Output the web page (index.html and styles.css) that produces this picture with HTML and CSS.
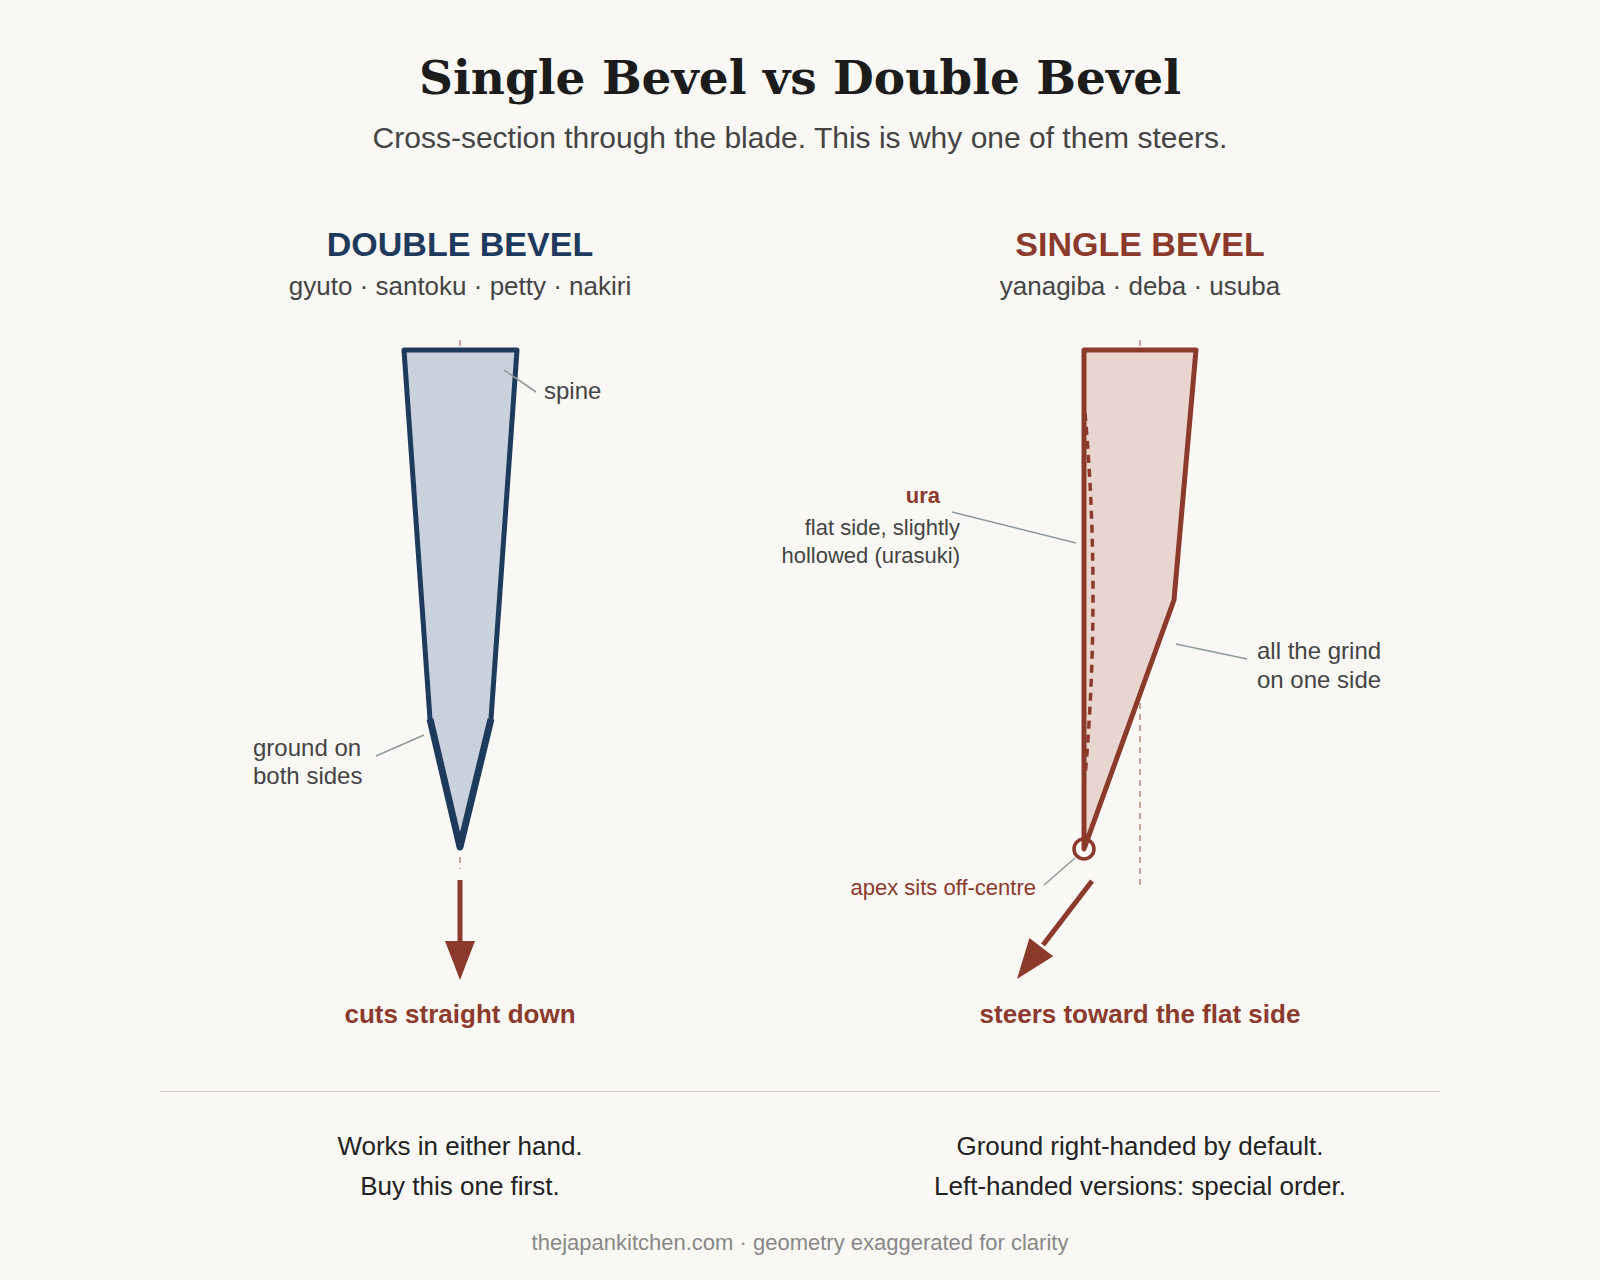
FILE: index.html
```html
<!DOCTYPE html>
<html lang="en">
<head>
<meta charset="utf-8">
<title>Single Bevel vs Double Bevel</title>
<link rel="stylesheet" href="styles.css">
</head>
<body>
<div class="page">
  <header class="header">
    <h1 class="title">Single Bevel vs Double Bevel</h1>
    <p class="subtitle">Cross-section through the blade. This is why one of them steers.</p>
  </header>

  <section class="columns">
    <div class="col">
      <h2 class="kind-title kind-double">DOUBLE BEVEL</h2>
      <p class="kinds">gyuto · santoku · petty · nakiri</p>
      <svg class="diagram" width="680" height="660" viewBox="120 330 680 660" xmlns="http://www.w3.org/2000/svg">
        <line class="centre" x1="460" y1="340" x2="460" y2="350"/>
        <line class="centre" x1="460" y1="857" x2="460" y2="869"/>
        <polygon class="blade-d" points="404,350 517,350 491,719 460,847 430,719"/>
        <polyline class="bevel-d" points="430,719 460,847 491,719"/>
        <line class="leader" x1="504" y1="370" x2="536" y2="392"/>
        <text class="lbl" x="544" y="399">spine</text>
        <line class="leader" x1="376" y1="756" x2="424" y2="735"/>
        <text class="lbl" x="253" y="756">ground on</text>
        <text class="lbl" x="253" y="784">both sides</text>
        <line class="arrow-line" x1="460" y1="880" x2="460" y2="943"/>
        <polygon class="arrow-head" points="445,941 475,941 460,980"/>
      </svg>
      <p class="caption">cuts straight down</p>
    </div>

    <div class="col">
      <h2 class="kind-title kind-single">SINGLE BEVEL</h2>
      <p class="kinds">yanagiba · deba · usuba</p>
      <svg class="diagram" width="680" height="660" viewBox="800 330 680 660" xmlns="http://www.w3.org/2000/svg">
        <line class="centre" x1="1140" y1="340" x2="1140" y2="889"/>
        <polygon class="blade-s" points="1084,350 1196,350 1174,600 1084,849"/>
        <path class="hollow" d="M1085,413 Q1101,595 1085,777"/>
        <circle class="apex" cx="1084" cy="849" r="10"/>
        <line class="leader" x1="952" y1="512" x2="1076" y2="543"/>
        <text class="lbl-b" x="940" y="503" text-anchor="end">ura</text>
        <text class="lbl-s" x="960" y="535" text-anchor="end">flat side, slightly</text>
        <text class="lbl-s" x="960" y="563" text-anchor="end">hollowed (urasuki)</text>
        <line class="leader" x1="1176" y1="644" x2="1247" y2="659"/>
        <text class="lbl" x="1257" y="659">all the grind</text>
        <text class="lbl" x="1257" y="688">on one side</text>
        <line class="leader" x1="1044" y1="885" x2="1075" y2="858"/>
        <text class="lbl-r" x="1036" y="895" text-anchor="end">apex sits off-centre</text>
        <line class="arrow-line" x1="1092" y1="881" x2="1043" y2="945"/>
        <polygon class="arrow-head" points="1017,979 1029.4,938.1 1053.2,956.3"/>
      </svg>
      <p class="caption">steers toward the flat side</p>
    </div>
  </section>

  <hr class="sep">

  <section class="notes">
    <div class="note">
      <p>Works in either hand.</p>
      <p>Buy this one first.</p>
    </div>
    <div class="note">
      <p>Ground right-handed by default.</p>
      <p>Left-handed versions: special order.</p>
    </div>
  </section>

  <p class="credit">thejapankitchen.com · geometry exaggerated for clarity</p>
</div>
</body>
</html>
```

FILE: styles.css
```css
html, body {
  margin: 0;
  padding: 0;
  background: #f9f8f5;
}

body {
  font-family: "Liberation Sans", Arial, sans-serif;
  color: #222;
}

.page {
  width: 1600px;
}

.header {
  text-align: center;
  padding-top: 42px;
}

.title {
  margin: 0;
  font-family: "DejaVu Serif", serif;
  font-weight: bold;
  font-size: 47px;
  line-height: 72px;
  color: #1c1c1c;
}

.subtitle {
  margin: 6px 0 0;
  font-size: 30px;
  line-height: 36px;
  color: #444;
}

.columns {
  display: flex;
  padding: 0 120px;
  margin-top: 68px;
}

.col {
  width: 680px;
  text-align: center;
}

.kind-title {
  margin: 0;
  font-size: 34px;
  line-height: 40px;
  font-weight: bold;
}

.kind-double { color: #1e3a5c; }
.kind-single { color: #8b3a2c; }

.kinds {
  margin: 6px 0 0;
  font-size: 26px;
  line-height: 32px;
  color: #444;
}

.diagram {
  display: block;
  margin-top: 28px;
  overflow: visible;
}

.diagram text {
  font-family: "Liberation Sans", Arial, sans-serif;
}

.centre {
  stroke: #c9a59b;
  stroke-width: 2;
  stroke-dasharray: 6 5;
}

.blade-d {
  fill: #c9d2dc;
  stroke: #1e3a5c;
  stroke-width: 5;
  stroke-linejoin: round;
}

.bevel-d {
  fill: none;
  stroke: #1e3a5c;
  stroke-width: 7;
  stroke-linejoin: round;
}

.blade-s {
  fill: #e8d5cf;
  stroke: #8b3a2c;
  stroke-width: 5;
  stroke-linejoin: round;
}

.hollow {
  fill: none;
  stroke: #8b3a2c;
  stroke-width: 3.5;
  stroke-dasharray: 8 6;
}

.apex {
  fill: none;
  stroke: #8b3a2c;
  stroke-width: 3.5;
}

.leader {
  stroke: #8f9a9d;
  stroke-width: 1.6;
}

.lbl {
  font-size: 24px;
  fill: #444;
}

.lbl-s {
  font-size: 22px;
  fill: #444;
}

.lbl-b {
  font-size: 22px;
  font-weight: bold;
  fill: #8b3a2c;
}

.lbl-r {
  font-size: 22px;
  fill: #8b3a2c;
}

.arrow-line {
  stroke: #8b3a2c;
  stroke-width: 5;
}

.arrow-head {
  fill: #8b3a2c;
}

.caption {
  margin: 8px 0 0;
  font-size: 26px;
  line-height: 32px;
  font-weight: bold;
  color: #8b3a2c;
}

.sep {
  margin: 61px 160px 0;
  border: 0;
  border-top: 1px solid #d3d0cb;
  height: 0;
}

.notes {
  display: flex;
  padding: 0 120px;
  margin-top: 34px;
}

.note {
  width: 680px;
  text-align: center;
  font-size: 26px;
  line-height: 40px;
  color: #222;
}

.note p {
  margin: 0;
}

.credit {
  margin: 23px 0 0;
  text-align: center;
  font-size: 22px;
  line-height: 28px;
  color: #888;
}
```
